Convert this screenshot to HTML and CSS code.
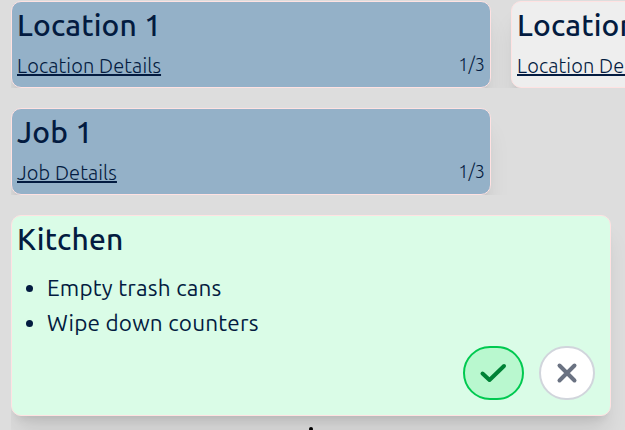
FILE: index.html
```html
<!DOCTYPE html>
<html lang="en">
<head>
    <meta charset="UTF-8">
    <meta name="viewport" content="width=device-width, initial-scale=1.0">
    <title>Jobs</title>
    <link rel="stylesheet" href="styles.css">
</head>
<body>
    <main>
        <section class="row">
            <div class="card selected">
                <h2>Location 1</h2>
                <div class="info">
                    <a>Location Details</a>
                    <span class="count">1/3</span>
                </div>
            </div>
            <div class="card">
                <h2>Location 2</h2>
                <div class="info">
                    <a>Location Details</a>
                    <span class="count">1/3</span>
                </div>
            </div>
        </section>

        <section class="row">
            <div class="card selected">
                <h2>Job 1</h2>
                <div class="info">
                    <a>Job Details</a>
                    <span class="count">1/3</span>
                </div>
            </div>
        </section>

        <section class="row tasks">
            <div class="card task">
                <h2>Kitchen</h2>
                <ul>
                    <li>Empty trash cans</li>
                    <li>Wipe down counters</li>
                </ul>
                <div class="actions">
                    <button type="button" class="done" aria-label="Done">
                        <svg width="30" height="24" viewBox="0 0 30 24">
                            <path d="M3.5 12.5 L10.5 19 L25 5" />
                        </svg>
                    </button>
                    <button type="button" class="cancel" aria-label="Cancel">
                        <svg width="24" height="24" viewBox="0 0 24 24">
                            <path d="M4.5 4.5 L19.5 19.5 M19.5 4.5 L4.5 19.5" />
                        </svg>
                    </button>
                </div>
            </div>
        </section>
        <div class="dot"></div>
    </main>
</body>
</html>
```

FILE: styles.css
```css
* {
    box-sizing: border-box;
}

body {
    margin: 0;
    height: 430px;
    overflow: hidden;
    background-color: #dddddd;
    color: #031b40;
    font-family: Ubuntu, "Noto Sans", sans-serif;
}

main {
    height: 430px;
    padding: 1px 0 0 11px;
    overflow: hidden;
}

.row {
    display: flex;
    gap: 20px;
    height: 87px;
    margin-bottom: 20px;
    overflow: hidden;
}

.card {
    flex: none;
    width: 480px;
    height: 87px;
    padding: 5px;
    border: 1px solid #ffe2e2;
    border-radius: 10px;
    background-color: #eeeeee;
    box-shadow: 0 20px 25px -5px rgba(0, 0, 0, 0.1), 0 8px 10px -6px rgba(0, 0, 0, 0.1);
}

.selected {
    background-color: #94b1c8;
}

h2 {
    margin: 0;
    font-size: 30px;
    font-weight: 500;
    line-height: 36px;
    letter-spacing: 0.2px;
    white-space: nowrap;
}

.info {
    display: flex;
    justify-content: space-between;
    margin-top: 8px;
    font-size: 20px;
    font-weight: 300;
    line-height: 30px;
    white-space: nowrap;
}

.info a {
    letter-spacing: 0.13px;
    text-decoration: underline;
    text-decoration-thickness: 2px;
    text-underline-offset: 1px;
}

.count {
    font-size: 18px;
    line-height: 26px;
}

.tasks {
    height: 215px;
    margin: 0;
}

.task {
    width: 600px;
    height: 201px;
    background-color: #dafce7;
}

ul {
    margin: 13px 0 0;
    padding-left: 30px;
    font-size: 22.5px;
    line-height: 35px;
    letter-spacing: 0.2px;
}

.actions {
    display: flex;
    justify-content: flex-end;
    gap: 15px;
    margin: 6px 10px 0 0;
}

button {
    display: flex;
    align-items: center;
    justify-content: center;
    height: 54px;
    padding: 0;
    border-radius: 27px;
}

svg {
    fill: none;
    stroke-width: 4;
    stroke-linecap: round;
    stroke-linejoin: round;
}

.done {
    width: 61px;
    border: 2px solid #00c950;
    background-color: #b9f8cf;
    stroke: #008236;
}

.cancel {
    width: 56px;
    border: 2px solid #d1d5dc;
    background-color: #ffffff;
    stroke: #6a7282;
}

.dot {
    width: 4px;
    height: 4px;
    margin: -3px 0 0 298px;
    border-radius: 2px;
    background-color: #000000;
    position: relative;
}
```
